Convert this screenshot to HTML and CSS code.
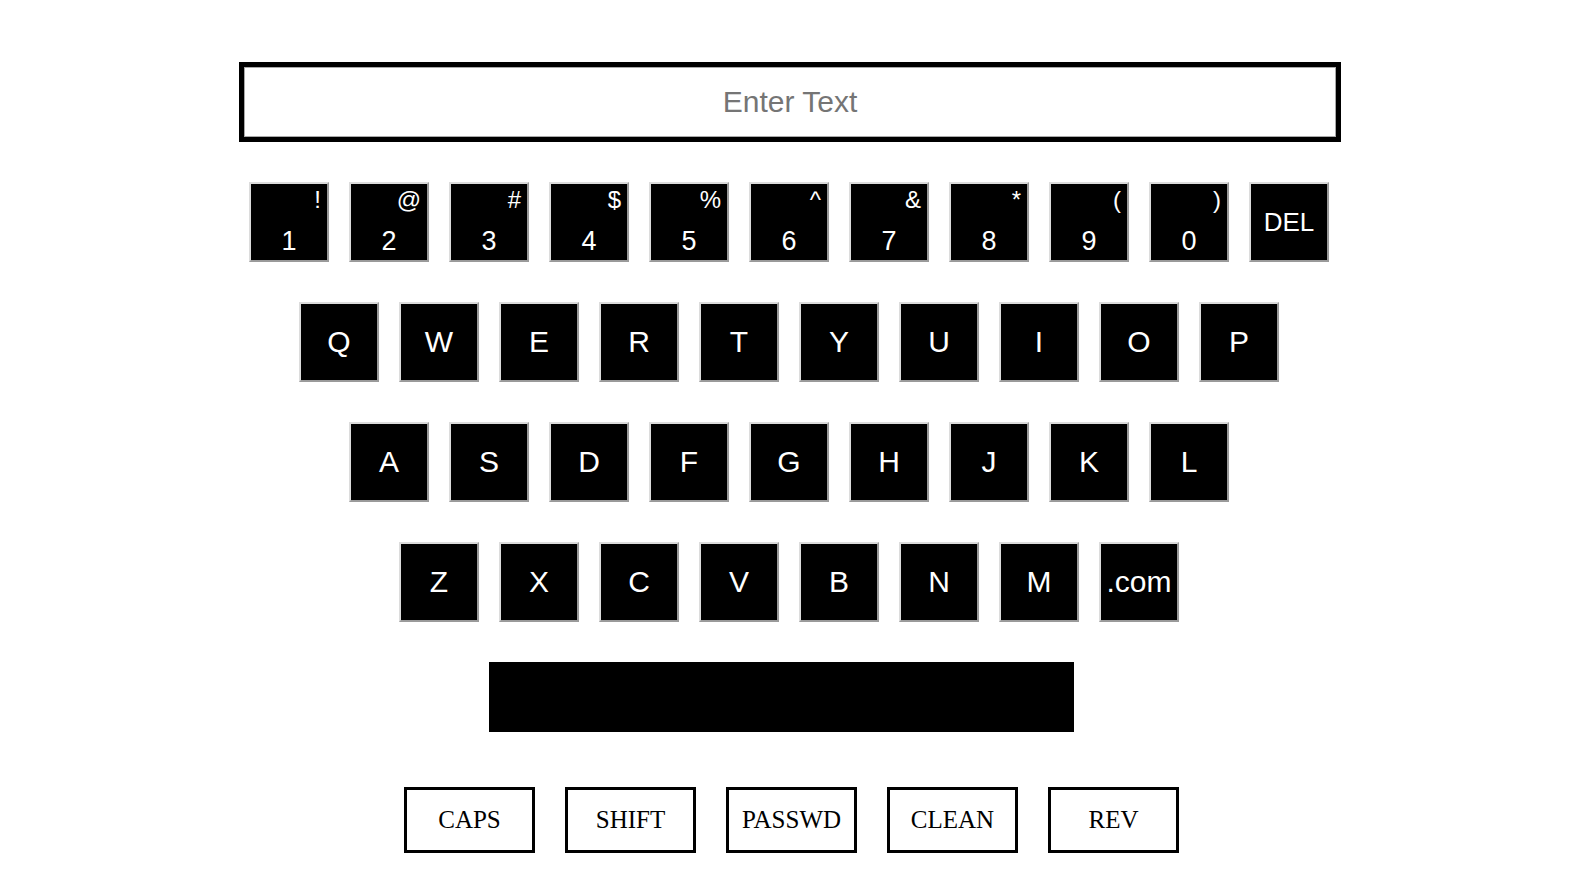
FILE: index.html
```html
<!DOCTYPE html>
<html>
<head>
<meta charset="utf-8">
<title>Keyboard</title>
<link rel="stylesheet" href="styles.css">
</head>
<body>
<div class="page">
  <div class="display"><input class="field" type="text" placeholder="Enter Text"></div>
  <div class="keyboard">
    <div class="row">
      <div class="key num"><span class="sym">!</span><span class="digit">1</span></div>
      <div class="key num"><span class="sym">@</span><span class="digit">2</span></div>
      <div class="key num"><span class="sym">#</span><span class="digit">3</span></div>
      <div class="key num"><span class="sym">$</span><span class="digit">4</span></div>
      <div class="key num"><span class="sym">%</span><span class="digit">5</span></div>
      <div class="key num"><span class="sym">^</span><span class="digit">6</span></div>
      <div class="key num"><span class="sym">&amp;</span><span class="digit">7</span></div>
      <div class="key num"><span class="sym">*</span><span class="digit">8</span></div>
      <div class="key num"><span class="sym">(</span><span class="digit">9</span></div>
      <div class="key num"><span class="sym">)</span><span class="digit">0</span></div>
      <div class="key del">DEL</div>
    </div>
    <div class="row">
      <div class="key">Q</div><div class="key">W</div><div class="key">E</div><div class="key">R</div><div class="key">T</div><div class="key">Y</div><div class="key">U</div><div class="key">I</div><div class="key">O</div><div class="key">P</div>
    </div>
    <div class="row">
      <div class="key">A</div><div class="key">S</div><div class="key">D</div><div class="key">F</div><div class="key">G</div><div class="key">H</div><div class="key">J</div><div class="key">K</div><div class="key">L</div>
    </div>
    <div class="row">
      <div class="key">Z</div><div class="key">X</div><div class="key">C</div><div class="key">V</div><div class="key">B</div><div class="key">N</div><div class="key">M</div><div class="key">.com</div>
    </div>
    <div class="space"></div>
  </div>
  <div class="controls">
    <div class="ctrl">CAPS</div>
    <div class="ctrl">SHIFT</div>
    <div class="ctrl">PASSWD</div>
    <div class="ctrl">CLEAN</div>
    <div class="ctrl">REV</div>
  </div>
</div>
</body>
</html>
```
FILE: styles.css
```css
html, body {
  margin: 0;
  padding: 0;
  background: #fff;
}
body {
  font-family: "Liberation Sans", Arial, sans-serif;
}
.page {
  padding: 62px 0 0 6px;
}
.display {
  width: 1102px;
  height: 80px;
  margin: 0 auto;
  box-sizing: border-box;
  border: 5px solid #000;
}
.field {
  display: block;
  width: 100%;
  height: 100%;
  box-sizing: border-box;
  margin: 0;
  border: 1px solid #a9a9a9;
  outline: none;
  text-align: center;
  font-family: "Liberation Sans", Arial, sans-serif;
  font-size: 30px;
  color: #000;
  background: #fff;
  padding: 0;
}
.field::placeholder {
  color: #757575;
}
.keyboard {
  margin-top: 40px;
  padding-right: 2px;
  display: flex;
  flex-direction: column;
  align-items: center;
  gap: 40px;
}
.row {
  display: flex;
  gap: 20px;
  justify-content: center;
}
.key {
  width: 80px;
  height: 80px;
  box-sizing: border-box;
  background: #000;
  border: 2px solid;
  border-color: #dcdcdc #9a9a9a #9a9a9a #dcdcdc;
  color: #fff;
  font-size: 30px;
  display: flex;
  align-items: center;
  justify-content: center;
}
.key.del {
  font-size: 26px;
}
.key.num {
  flex-direction: column;
  align-items: stretch;
  justify-content: space-between;
  padding: 3px 0 5px 0;
}
.sym {
  align-self: flex-end;
  padding-right: 6px;
  font-size: 24px;
  line-height: 26px;
}
.digit {
  align-self: center;
  font-size: 27px;
  line-height: 28px;
}
.space {
  width: 585px;
  height: 70px;
  background: #000;
  margin-right: 15px;
}
.controls {
  margin-top: 55px;
  padding-left: 3px;
  display: flex;
  justify-content: center;
  gap: 30px;
}
.ctrl {
  width: 131px;
  height: 66px;
  box-sizing: border-box;
  border: 3px solid #000;
  background: #fff;
  color: #000;
  font-family: "Liberation Serif", "Times New Roman", serif;
  font-size: 25px;
  display: flex;
  align-items: center;
  justify-content: center;
}
```
